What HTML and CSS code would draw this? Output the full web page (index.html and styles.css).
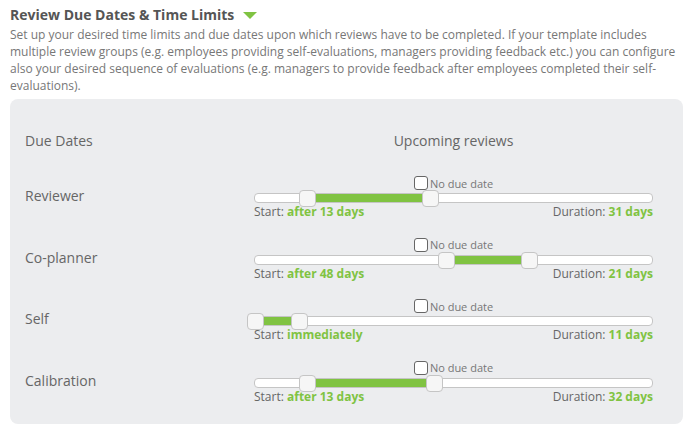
FILE: index.html
```html
<!DOCTYPE html>
<html lang="en">
<head>
    <meta charset="UTF-8">
    <meta name="viewport" content="width=device-width, initial-scale=1.0">
    <title>Review Due Dates &amp; Time Limits</title>
    <link rel="stylesheet" href="styles.css">
</head>
<body>
    <div class="wrap">
        <h2 class="title">Review Due Dates &amp; Time Limits <span class="caret"></span></h2>
        <p class="intro">Set up your desired time limits and due dates upon which reviews have to be completed. If your template includes multiple review groups (e.g. employees providing self-evaluations, managers providing feedback etc.) you can configure also your desired sequence of evaluations (e.g. managers to provide feedback after employees completed their self-evaluations).</p>

        <div class="panel">
            <div class="row head">
                <div class="label">Due Dates</div>
                <div class="col">Upcoming reviews</div>
            </div>

            <!-- Reviewer -->
            <div class="row">
                <div class="label">Reviewer</div>
                <div class="col">
                    <label class="nodue"><input type="checkbox"> No due date</label>
                    <div class="track">
                        <div class="range" style="left:13%;width:31%"></div>
                        <span class="handle" style="left:13%"></span>
                        <span class="handle" style="left:44%"></span>
                    </div>
                    <div class="info">
                        <span>Start: <b>after 13 days</b></span>
                        <span>Duration: <b>31 days</b></span>
                    </div>
                </div>
            </div>

            <!-- Co-planner -->
            <div class="row">
                <div class="label">Co-planner</div>
                <div class="col">
                    <label class="nodue"><input type="checkbox"> No due date</label>
                    <div class="track">
                        <div class="range" style="left:48%;width:21%"></div>
                        <span class="handle" style="left:48%"></span>
                        <span class="handle" style="left:69%"></span>
                    </div>
                    <div class="info">
                        <span>Start: <b>after 48 days</b></span>
                        <span>Duration: <b>21 days</b></span>
                    </div>
                </div>
            </div>

            <!-- Self -->
            <div class="row">
                <div class="label">Self</div>
                <div class="col">
                    <label class="nodue"><input type="checkbox"> No due date</label>
                    <div class="track">
                        <div class="range" style="left:0%;width:11%"></div>
                        <span class="handle" style="left:0%"></span>
                        <span class="handle" style="left:11%"></span>
                    </div>
                    <div class="info">
                        <span>Start: <b>immediately</b></span>
                        <span>Duration: <b>11 days</b></span>
                    </div>
                </div>
            </div>

            <!-- Calibration -->
            <div class="row">
                <div class="label">Calibration</div>
                <div class="col">
                    <label class="nodue"><input type="checkbox"> No due date</label>
                    <div class="track">
                        <div class="range" style="left:13%;width:32%"></div>
                        <span class="handle" style="left:13%"></span>
                        <span class="handle" style="left:45%"></span>
                    </div>
                    <div class="info">
                        <span>Start: <b>after 13 days</b></span>
                        <span>Duration: <b>32 days</b></span>
                    </div>
                </div>
            </div>
        </div>
    </div>
</body>
</html>
```

FILE: styles.css
```css
body { margin: 0; font-family: "Open Sans", sans-serif; color: #666; background: #fff; }
.wrap { padding: 5px 11px 0 10px; }
.title { margin: 0; font-size: 14px; line-height: 20px; font-weight: bold; color: #555; display: flex; align-items: center; gap: 9px; }
.caret { width: 0; height: 0; border-left: 7px solid transparent; border-right: 7px solid transparent; border-top: 7px solid #80c342; margin-top: 1px; }
.intro { margin: 1px 0 5px; font-size: 12px; line-height: 17px; color: #777; }

.panel { background: #ecedef; border-radius: 8px; padding: 31px 30px 19px 15px; }
.row { display: grid; grid-template-columns: 229px 1fr; margin-bottom: 15.5px; }
.row:last-child { margin-bottom: 0; }
.row.head { margin-bottom: 22px; font-size: 14px; line-height: 22px; color: #666; }
.row.head .col { text-align: center; }
.label { font-size: 14px; line-height: 20px; padding-top: 12px; color: #666; }
.row.head .label { padding-top: 0; line-height: 22px; }

.nodue { display: flex; justify-content: center; align-items: center; gap: 2px; height: 18px; font-size: 11px; color: #777; padding-bottom: 1px; }
.nodue input { appearance: none; width: 14px; height: 14px; margin: 0; border: 1px solid #666; border-radius: 3px; background: #fff; }

.track { position: relative; height: 8px; border: 1px solid #c5c5c5; border-radius: 4px; background: #fff; }
.range { position: absolute; top: 0; bottom: 0; background: #80c342; }
.handle { position: absolute; top: -4px; width: 15px; height: 15px; margin-left: -8px; background: #f6f6f6; border: 1px solid #c5c5c5; border-radius: 4px; }

.info { display: flex; justify-content: space-between; font-size: 12px; line-height: 17px; color: #666; }
.info b { color: #80c342; }
```
